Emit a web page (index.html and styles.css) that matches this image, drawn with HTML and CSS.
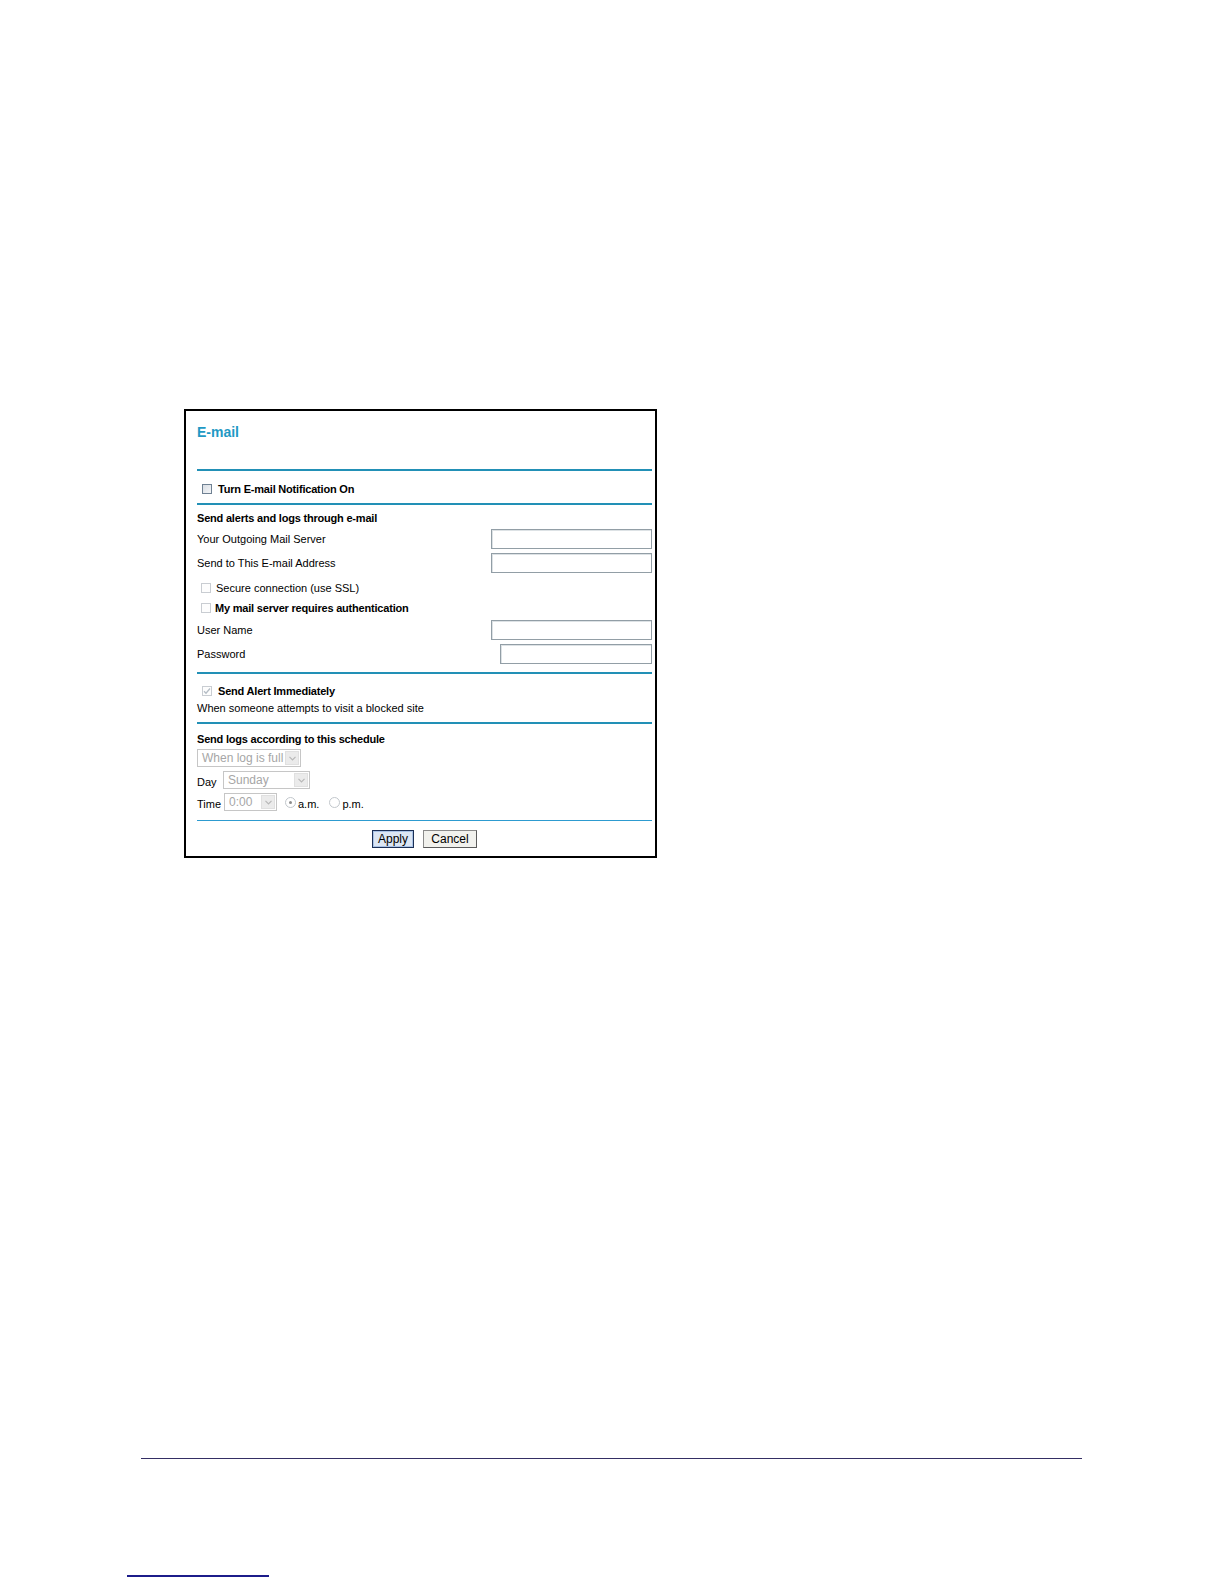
FILE: index.html
```html
<!DOCTYPE html>
<html>
<head>
<meta charset="utf-8">
<title>E-mail</title>
<link rel="stylesheet" href="styles.css">
</head>
<body>
<div class="page">
  <div class="panel">
    <h1 class="title">E-mail</h1>
    <div class="rule"></div>
    <div class="row row-turn">
      <span class="cb cb-active"></span>
      <span class="bold gap6">Turn E-mail Notification On</span>
    </div>
    <div class="rule"></div>

    <div class="sec sec-mail">
      <div class="row r-head bold">Send alerts and logs through e-mail</div>
      <div class="row r-field">
        <span>Your Outgoing Mail Server</span>
        <span class="input"></span>
      </div>
      <div class="row r-field">
        <span>Send to This E-mail Address</span>
        <span class="input"></span>
      </div>
      <div class="row r-check r-ssl">
        <span class="cb cb-off"></span>
        <span class="gap5">Secure connection (use SSL)</span>
      </div>
      <div class="row r-check">
        <span class="cb cb-off"></span>
        <span class="bold gap4">My mail server requires authentication</span>
      </div>
      <div class="row r-field">
        <span>User Name</span>
        <span class="input"></span>
      </div>
      <div class="row r-field">
        <span>Password</span>
        <span class="input input-short"></span>
      </div>
    </div>
    <div class="rule"></div>

    <div class="sec sec-alert">
      <div class="row r-line">
        <span class="cb cb-off cb-checked">
          <svg width="8" height="8" viewBox="0 0 8 8"><path d="M1 4.2 L3 6.2 L7 1.5" fill="none" stroke="#b4bcc4" stroke-width="1.3"/></svg>
        </span>
        <span class="bold gap6">Send Alert Immediately</span>
      </div>
      <div class="row r-line r-line-desc">When someone attempts to visit a blocked site</div>
    </div>
    <div class="rule"></div>

    <div class="sec sec-sched">
      <div class="row r-shead bold">Send logs according to this schedule</div>
      <div class="row r-sel r-sel-first">
        <div class="sel sel-when">
          <span class="sel-text">When log is full</span>
          <span class="sel-arrow"><svg width="7" height="5" viewBox="0 0 7 5"><path d="M0.5 0.8 L3.5 3.8 L6.5 0.8" fill="none" stroke="#b8b8b8" stroke-width="1.2"/></svg></span>
        </div>
      </div>
      <div class="row r-sel">
        <span class="sel-label lbl-day">Day</span>
        <div class="sel sel-day">
          <span class="sel-text">Sunday</span>
          <span class="sel-arrow"><svg width="7" height="5" viewBox="0 0 7 5"><path d="M0.5 0.8 L3.5 3.8 L6.5 0.8" fill="none" stroke="#b8b8b8" stroke-width="1.2"/></svg></span>
        </div>
      </div>
      <div class="row r-sel">
        <span class="sel-label lbl-time">Time</span>
        <div class="sel sel-time">
          <span class="sel-text">0:00</span>
          <span class="sel-arrow"><svg width="7" height="5" viewBox="0 0 7 5"><path d="M0.5 0.8 L3.5 3.8 L6.5 0.8" fill="none" stroke="#b8b8b8" stroke-width="1.2"/></svg></span>
        </div>
        <span class="radio radio-on"></span>
        <span class="radio-text">a.m.</span>
        <span class="radio radio-pm"></span>
        <span class="radio-text">p.m.</span>
      </div>
    </div>
    <div class="rule rule-thin"></div>

    <div class="sec sec-buttons">
      <span class="btn btn-default">Apply</span>
      <span class="btn">Cancel</span>
    </div>
  </div>

  <div class="foot-rule"></div>
  <div class="foot-link"></div>
</div>
</body>
</html>
```

FILE: styles.css
```css
html, body {
  margin: 0;
  padding: 0;
  background: #ffffff;
}

.page {
  padding-top: 409px;
  font-family: "Liberation Sans", Arial, sans-serif;
  font-size: 11px;
  color: #000;
}

.panel {
  margin-left: 184px;
  width: 473px;
  box-sizing: border-box;
  border: 2px solid #000;
  padding: 0 3px 0 11px;
}

.title {
  margin: 0 0 29px 0;
  padding-top: 13px;
  font-size: 14px;
  line-height: 16px;
  font-weight: bold;
  color: #1f99c4;
}

.rule {
  height: 2px;
  background: #2290b6;
}

.rule-thin {
  height: 1px;
  background: #2d9bd0;
}

.row {
  display: flex;
  align-items: center;
  white-space: nowrap;
}

.bold {
  font-weight: bold;
  letter-spacing: -0.2px;
}

.gap6 { margin-left: 6px; }
.gap5 { margin-left: 5px; }
.gap4 { margin-left: 4px; }

.row-turn {
  height: 28px;
  padding-top: 4px;
}

/* checkboxes */
.cb {
  display: inline-flex;
  align-items: center;
  justify-content: center;
  box-sizing: border-box;
  width: 10px;
  height: 10px;
  margin-left: 5px;
  flex: none;
}

.cb-active {
  border: 1px solid #6f8193;
  background: linear-gradient(135deg, #d9dee4 0%, #f4f6f8 100%);
}

.cb-off {
  border: 1px solid #c9cdd2;
  background: #fdfdfd;
}

.r-check .cb { margin-left: 4px; }

/* mail section */
.sec-mail {
  padding-top: 4px;
  padding-bottom: 6px;
}

.r-head { height: 18px; }

.r-field {
  height: 24px;
  justify-content: space-between;
}

.r-check { height: 20px; }
.r-ssl { margin-top: 3px; }

.input {
  display: block;
  box-sizing: border-box;
  width: 161px;
  height: 20px;
  border: 1px solid #929ea6;
  box-shadow: inset 1px 1px 0 #dde2e5;
  background: #fff;
}

.input-short { width: 152px; }

/* alert section */
.sec-alert {
  padding-top: 11px;
  padding-bottom: 8px;
}

.r-line { height: 12px; }
.r-line-desc { margin-top: 5px; }

.cb-checked { margin-left: 5px; }

/* schedule section */
.sec-sched {
  padding-top: 7px;
  padding-bottom: 9px;
}

.r-shead { height: 16px; }

.r-sel {
  height: 18px;
  margin-top: 4px;
}

.r-sel-first { margin-top: 2px; }

.sel {
  display: flex;
  box-sizing: border-box;
  height: 18px;
  border: 1px solid #c6c6c6;
  background: #fff;
}

.sel-when { width: 104px; }
.sel-day { width: 87px; }
.sel-time { width: 53px; }

.sel-text {
  flex: 1;
  padding-left: 4px;
  font-size: 12px;
  line-height: 16px;
  color: #a6a6a6;
}

.sel-arrow {
  display: flex;
  align-items: center;
  justify-content: center;
  width: 14px;
  margin: 1px;
  background: #ebebeb;
  border: 1px solid #e0e0e0;
  box-sizing: border-box;
}

.sel-label {
  align-self: flex-end;
  line-height: 14px;
}

.lbl-day { width: 26px; }
.lbl-time { width: 27px; }

.radio {
  display: inline-flex;
  align-items: center;
  justify-content: center;
  box-sizing: border-box;
  width: 11px;
  height: 11px;
  border: 1px solid #c2c7cc;
  border-radius: 50%;
  background: #fff;
  margin-left: 8px;
  flex: none;
}

.radio-on::after {
  content: "";
  width: 3px;
  height: 3px;
  border-radius: 50%;
  background: #8c8c8c;
}

.radio-pm { margin-left: 10px; }

.radio-text {
  margin-left: 2px;
  align-self: flex-end;
  line-height: 14px;
}

/* buttons */
.sec-buttons {
  display: flex;
  justify-content: center;
  gap: 9px;
  padding-top: 9px;
  padding-bottom: 8px;
}

.btn {
  display: flex;
  align-items: center;
  justify-content: center;
  box-sizing: border-box;
  height: 18px;
  width: 54px;
  font-size: 12px;
  border: 1px solid #8a8a8a;
  border-right-color: #5a5a5a;
  border-bottom-color: #5a5a5a;
  background: #f1f1ed;
}

.btn-default {
  width: 42px;
  border: 1px solid #1b2f55;
  background: #dce6f3;
  box-shadow: inset 0 0 0 1px #a9c2e6;
}

/* page footer lines */
.foot-rule {
  margin-top: 600px;
  margin-left: 141px;
  width: 941px;
  height: 1px;
  background: #342e64;
}

.foot-link {
  margin-top: 116px;
  margin-left: 127px;
  width: 142px;
  height: 2px;
  background: #1c1c8a;
}
```
